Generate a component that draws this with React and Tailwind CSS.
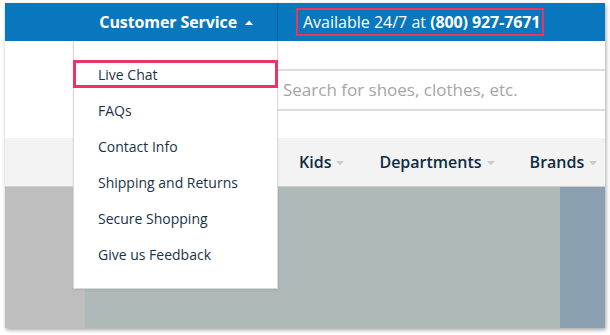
const MENU = ["Live Chat", "FAQs", "Contact Info", "Shipping and Returns", "Secure Shopping", "Give us Feedback"];
const NAV = [
  { label: "Kids", gap: "mr-[35px]" },
  { label: "Departments", gap: "mr-[35px]" },
  { label: "Brands", gap: "" },
];

function Caret({ up, className }) {
  return (
    <svg width="8" height="5" viewBox="0 0 8 5" className={className} aria-hidden="true">
      <path d={up ? "M0 5 L4 0.5 L8 5 Z" : "M0 0 L4 4.5 L8 0 Z"} fill="currentColor" />
    </svg>
  );
}

export default function App() {
  return (
    <div className="h-[335px] w-[610px] bg-white pl-[5px] pt-[3px]" style={{ fontFamily: '"Open Sans", "Liberation Sans", sans-serif' }}>
      <div className="relative flex h-[325px] w-[600px] flex-col overflow-hidden bg-white shadow-[1px_2px_4px_rgba(0,0,0,0.35)]">
        {/* top bar */}
        <div className="flex h-[38px] shrink-0 bg-[#0977be] text-white">
          <div className="flex w-[272px] items-center justify-end pr-[24px]">
            <span className="text-[16px] font-bold tracking-[-0.1px]">Customer Service</span>
            <Caret up className="ml-[8px] mt-[1px]" />
          </div>
          <div className="w-px bg-[#0a5e96]" />
          <div className="flex items-center pl-[18px]">
            <div className="flex h-[28px] items-center border-2 border-[#ec3462] pl-[5px] pr-[2px] text-[16px]">
              <span>Available 24/7 at&nbsp;</span>
              <span className="font-bold tracking-[-0.1px]">(800) 927-7671</span>
            </div>
          </div>
        </div>

        {/* search row */}
        <div className="flex h-[97px] shrink-0 items-start pt-[28px]">
          <div className="ml-[272px] flex h-[42px] flex-1 items-center border-y-2 border-[#dcdcdc] pl-[6px] text-[17px] text-[#a5a5a5]">
            Search for shoes, clothes, etc.
          </div>
        </div>

        {/* nav */}
        <div className="flex h-[49px] shrink-0 items-center border-b border-[#d0d0d0] bg-[#f3f3f3] pl-[294px] text-[16px] font-semibold text-[#0d2c44]">
          {NAV.map(({ label, gap }) => (
            <div key={label} className={`flex items-center ${gap}`}>
              <span>{label}</span>
              <Caret className="ml-[5px] mt-[2px] text-[#cdcdcd]" />
            </div>
          ))}
        </div>

        {/* hero */}
        <div className="flex flex-1">
          <div className="w-[80px] bg-[#bebebe]" />
          <div className="flex-1 bg-[#aeb9b8]" />
          <div className="w-[45px] bg-[#8a9fb0]" />
        </div>

        {/* dropdown */}
        <div className="absolute left-[68px] top-[38px] w-[205px] border border-t-0 border-[#dadada] bg-white pt-[15px] pb-[16px] shadow-[0_1px_2px_rgba(0,0,0,0.08)]">
          {MENU.map((item, i) =>
            i === 0 ? (
              <div key={item} className="-mx-px flex h-[36px] items-center">
                <div className="flex h-[28px] flex-1 items-center border-[3px] border-[#ec3462] pl-[22px] text-[14px] text-[#1a3347]">
                  {item}
                </div>
              </div>
            ) : (
              <div key={item} className="flex h-[36px] items-center pl-[24px] text-[14px] text-[#1a3347]">
                {item}
              </div>
            )
          )}
        </div>
      </div>
    </div>
  );
}
